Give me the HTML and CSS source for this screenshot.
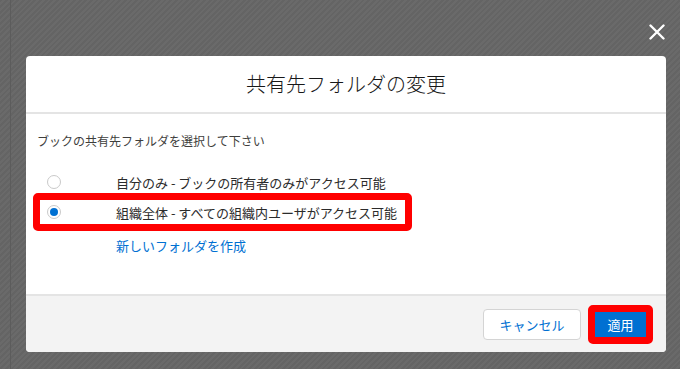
FILE: index.html
```html
<!DOCTYPE html>
<html lang="ja">
<head>
    <meta charset="UTF-8">
    <meta name="viewport" content="width=device-width, initial-scale=1.0">
    <title>共有先フォルダの変更</title>
    <link rel="stylesheet" href="styles.css">
</head>
<body>
    <div class="backdrop">
        <div class="topbar">
            <button class="close" aria-label="閉じる">
                <svg width="16" height="16" viewBox="0 0 16 16">
                    <path d="M1.5 1.5 L14.5 14.5 M14.5 1.5 L1.5 14.5" stroke="#fff" stroke-width="2.4" stroke-linecap="round"/>
                </svg>
            </button>
        </div>

        <div class="modal">
            <div class="modal-header">
                <h2>共有先フォルダの変更</h2>
            </div>

            <div class="modal-body">
                <p class="lead">ブックの共有先フォルダを選択して下さい</p>

                <div class="options">
                    <label class="option">
                        <span class="radio"></span>
                        <span class="option-text">自分のみ - ブックの所有者のみがアクセス可能</span>
                    </label>
                    <label class="option marked">
                        <span class="radio checked"></span>
                        <span class="option-text">組織全体 - すべての組織内ユーザがアクセス可能</span>
                    </label>
                </div>

                <a class="new-folder" href="#">新しいフォルダを作成</a>
            </div>

            <div class="modal-footer">
                <button class="btn btn-cancel">キャンセル</button>
                <span class="mark-btn">
                    <button class="btn btn-apply">適用</button>
                </span>
            </div>
        </div>
    </div>
</body>
</html>
```

FILE: styles.css
```css
html, body {
    margin: 0;
    height: 100%;
}

body {
    font-family: "Noto Sans CJK JP", "Noto Sans", sans-serif;
    color: #3e3e3c;
    background: repeating-linear-gradient(135deg, #646464 0, #646464 2px, #6a6a6a 2px, #6a6a6a 4px);
}

.backdrop {
    height: 100%;
    box-sizing: border-box;
    margin-left: 10px;
    border-left: 1px solid #5c5c5c;
    padding: 0 14px 0 15px;
}

.topbar {
    height: 56px;
    display: flex;
    justify-content: flex-end;
    align-items: flex-start;
}

.close {
    margin-top: 24px;
    margin-right: 1px;
    padding: 0;
    border: none;
    background: none;
    width: 16px;
    height: 16px;
    display: flex;
}

.modal {
    width: 640px;
    height: 296px;
    background: #fff;
    border-radius: 4px;
    display: flex;
    flex-direction: column;
    overflow: hidden;
}

.modal-header {
    height: 56px;
    border-bottom: 2px solid #e4e4e4;
    display: flex;
    justify-content: center;
    align-items: center;
}

.modal-header h2 {
    margin: 0;
    font-size: 20px;
    font-weight: 300;
    color: #181818;
    line-height: 24px;
}

.modal-body {
    flex: 1;
    padding: 18px 11px 0;
}

.lead {
    margin: 0;
    font-size: 12px;
    line-height: 18px;
}

.options {
    margin-top: 20px;
    display: flex;
    flex-direction: column;
    align-items: flex-start;
}

.option {
    display: flex;
    align-items: center;
    height: 24px;
    padding-left: 10px;
    font-size: 13px;
}

.option-text {
    margin-left: 55px;
    color: #2b2b2b;
}

/* 赤枠で強調された行 */
.option.marked {
    width: 358px;
    border: 7px solid #ff0000;
    border-radius: 5px;
    margin: -1px 0 0 -4px;
    padding-left: 7px;
}

.radio {
    width: 14px;
    height: 14px;
    box-sizing: border-box;
    border: 1px solid #c9c9c9;
    border-radius: 50%;
    background: #fff;
    display: flex;
    justify-content: center;
    align-items: center;
}

.radio.checked::after {
    content: "";
    width: 8px;
    height: 8px;
    border-radius: 50%;
    background: #0070d2;
}

.new-folder {
    display: inline-block;
    margin: 6px 0 0 79px;
    font-size: 13px;
    line-height: 18px;
    color: #0070d2;
    text-decoration: none;
}

.modal-footer {
    height: 56px;
    border-top: 2px solid #e4e4e4;
    background: #f3f3f3;
    display: flex;
    justify-content: flex-end;
    align-items: center;
    gap: 7px;
    padding-right: 13px;
}

.btn {
    font-family: inherit;
    font-size: 13px;
    border-radius: 4px;
    padding: 0;
}

.btn-cancel {
    width: 98px;
    height: 31px;
    background: #fff;
    border: 1px solid #d4d4d4;
    color: #0070d2;
}

.mark-btn {
    display: flex;
    border: 7px solid #ff0000;
    border-radius: 5px;
}

.btn-apply {
    width: 51px;
    height: 25px;
    border: none;
    border-radius: 0;
    background: #0070d2;
    color: #fff;
}
```
